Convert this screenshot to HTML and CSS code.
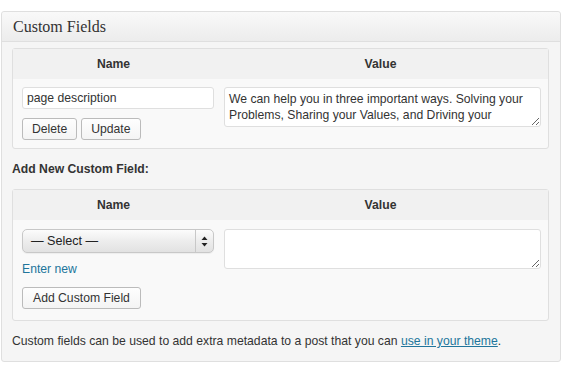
FILE: index.html
```html
<!DOCTYPE html>
<html>
<head>
<meta charset="utf-8">
<link rel="stylesheet" href="styles.css">
</head>
<body>
<div class="postbox">
  <h3 class="hndle">Custom Fields</h3>
  <div class="inside">
    <div class="cf-table">
      <div class="cf-head">
        <div class="cf-name-h">Name</div>
        <div class="cf-value-h">Value</div>
      </div>
      <div class="cf-row cf-row-existing">
        <div class="cf-name">
          <input class="text-input" type="text" value="page description">
          <div class="btn-group">
            <button class="btn">Delete</button>
            <button class="btn">Update</button>
          </div>
        </div>
        <div class="cf-value">
          <textarea class="value-area">We can help you in three important ways. Solving your Problems, Sharing your Values, and Driving your</textarea>
        </div>
      </div>
    </div>

    <p class="add-title">Add New Custom Field:</p>

    <div class="cf-table">
      <div class="cf-head">
        <div class="cf-name-h">Name</div>
        <div class="cf-value-h">Value</div>
      </div>
      <div class="cf-row cf-row-new">
        <div class="cf-name">
          <div class="select-box">
            <span class="select-label">— Select —</span>
            <span class="select-arrows">
              <svg width="7" height="11" viewBox="0 0 7 11"><path d="M3.5 0.5 L6.5 4 L0.5 4 Z" fill="#222"/><path d="M3.5 10.5 L6.5 7 L0.5 7 Z" fill="#222"/></svg>
            </span>
          </div>
          <a class="enter-new" href="#">Enter new</a>
          <button class="btn btn-add">Add Custom Field</button>
        </div>
        <div class="cf-value">
          <textarea class="value-area"></textarea>
        </div>
      </div>
    </div>

    <p class="note">Custom fields can be used to add extra metadata to a post that you can <a href="#" class="theme-link">use in your theme</a>.</p>
  </div>
</div>
</body>
</html>
```

FILE: styles.css
```css
* { box-sizing: border-box; }

body {
  margin: 0;
  padding: 11px 0 0 1px;
  background: #fff;
  font-family: "Liberation Sans", Arial, sans-serif;
  font-size: 12.2px;
  color: #333;
}

.postbox {
  width: 560px;
  border: 1px solid #dfdfdf;
  border-radius: 3px;
  background: #f5f5f5;
}

.hndle {
  margin: 0;
  height: 30px;
  padding: 0 11px;
  border-bottom: 1px solid #dfdfdf;
  border-radius: 3px 3px 0 0;
  background: linear-gradient(to bottom, #f9f9f9, #ececec);
  font-family: "Liberation Serif", "DejaVu Serif", serif;
  font-weight: normal;
  font-size: 16px;
  line-height: 30px;
  color: #333;
}

.inside {
  padding: 6px 11px 12px 10px;
}

.cf-table {
  border: 1px solid #dfdfdf;
  border-radius: 3px;
  background: #f9f9f9;
}

.cf-head {
  display: grid;
  grid-template-columns: 201px 1fr;
  height: 30px;
  background: #f1f1f1;
  font-weight: bold;
  line-height: 30px;
  text-align: center;
  color: #333;
}

.cf-value-h { padding-right: 1px; }

.cf-row {
  display: grid;
  grid-template-columns: 201px 1fr;
  align-items: start;
}

.cf-row-existing { padding: 8px 0 8px; }
.cf-row-new { padding: 9px 0 11px; }

.cf-name {
  padding-left: 9px;
  display: flex;
  flex-direction: column;
  align-items: flex-start;
}

.cf-value {
  padding-left: 10px;
}

.text-input {
  width: 192px;
  height: 22px;
  margin: 0;
  padding: 0 4px;
  border: 1px solid #dfdfdf;
  border-radius: 3px;
  background: #fff;
  font-family: inherit;
  font-size: 12.2px;
  color: #333;
}

.btn-group {
  display: flex;
  gap: 4px;
  margin-top: 9px;
}

.btn {
  height: 22px;
  margin: 0;
  padding: 0 9px;
  border: 1px solid #bbb;
  border-radius: 3px;
  background: linear-gradient(to bottom, #fefefe, #f4f4f4);
  font-family: inherit;
  font-size: 12.2px;
  line-height: 20px;
  color: #333;
}

.btn-add {
  margin-top: 10px;
  padding: 0 10px;
}

.value-area {
  display: block;
  width: 317px;
  height: 40px;
  margin: 0;
  padding: 3px 4px;
  border: 1px solid #dfdfdf;
  border-radius: 3px;
  background: #fff;
  font-family: inherit;
  font-size: 12.2px;
  line-height: 16px;
  color: #333;
  overflow: hidden;
}

.select-box {
  display: flex;
  align-items: center;
  width: 192px;
  height: 24px;
  border: 1px solid #c8c8c8;
  border-radius: 5px;
  background: linear-gradient(to bottom, #fcfcfc, #ededed 50%, #e2e2e2);
  box-shadow: 0 1px 1px rgba(0,0,0,0.05);
}

.select-label {
  flex: 1;
  padding-left: 8px;
  font-size: 12.6px;
  color: #222;
}

.select-arrows {
  width: 18px;
  height: 100%;
  border-left: 1px solid #c8c8c8;
  display: flex;
  align-items: center;
  justify-content: center;
}

.select-arrows svg { display: block; }

.enter-new {
  margin-top: 8px;
  line-height: 16px;
  color: #21759b;
  text-decoration: none;
}

.add-title {
  margin: 12px 0 12px;
  font-weight: bold;
  line-height: 16px;
}

.note {
  margin: 12px 0 0;
  line-height: 16px;
}

.theme-link {
  color: #21759b;
  text-decoration: underline;
}
```
